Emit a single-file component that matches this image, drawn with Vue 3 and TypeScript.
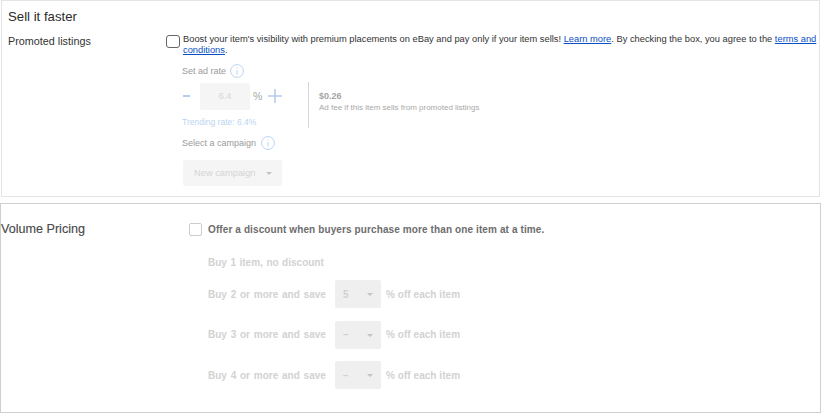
<script setup lang="ts">
interface Tier { label: string; value: string }
const tiers: Tier[] = [
  { label: 'Buy 2 or more and save', value: '5' },
  { label: 'Buy 3 or more and save', value: '–' },
  { label: 'Buy 4 or more and save', value: '–' },
]
</script>

<template>
  <div class="page">
    <section class="card sell">
      <h2 class="title">Sell it faster</h2>
      <div class="promo">
        <div class="promo-label">Promoted listings</div>
        <div class="promo-body">
          <div class="promo-check">
            <span class="box"></span>
            <div class="promo-text">
              <p class="promo-line">Boost your item's visibility with premium placements on eBay and pay only if your item sells! <a href="#">Learn more</a>. By checking the box, you agree to the <a href="#">terms and</a></p>
              <p class="promo-line"><a href="#">conditions</a>.</p>
            </div>
          </div>
          <div class="ad">
            <div class="ad-label">Set ad rate
              <svg class="info" width="14" height="14" viewBox="0 0 14 14"><circle cx="7" cy="7" r="6.4" fill="none" stroke="#b9d3f3"/><path d="M7 6v4.5M7 3.6v1.2" stroke="#b9d3f3" fill="none"/></svg>
            </div>
            <div class="rate-row">
              <div class="rate-left">
                <div class="stepper">
                  <span class="minus"></span>
                  <span class="rate-input">6.4</span>
                  <span class="pct">%</span>
                  <svg class="plus" width="14" height="14" viewBox="0 0 14 14"><path d="M7 0v14M0 7h14" stroke="#b4cdec" stroke-width="1.6" fill="none"/></svg>
                </div>
                <div class="trend">Trending rate: 6.4%</div>
              </div>
              <div class="fee">
                <div class="fee-value">$0.26</div>
                <div class="fee-text">Ad fee if this item sells from promoted listings</div>
              </div>
            </div>
            <div class="ad-label camp">Select a campaign
              <svg class="info" width="14" height="14" viewBox="0 0 14 14"><circle cx="7" cy="7" r="6.4" fill="none" stroke="#b9d3f3"/><path d="M7 6v4.5M7 3.6v1.2" stroke="#b9d3f3" fill="none"/></svg>
            </div>
            <div class="camp-select">
              <span>New campaign</span>
              <i class="caret"></i>
            </div>
          </div>
        </div>
      </div>
    </section>

    <section class="card volume">
      <h2 class="vol-title">Volume Pricing</h2>
      <div class="vol-body">
        <div class="vol-check">
          <span class="box light"></span>
          <span class="vol-text">Offer a discount when buyers purchase more than one item at a time.</span>
        </div>
        <div class="tier-first">Buy 1 item, no discount</div>
        <div v-for="t in tiers" :key="t.label" class="tier">
          <span class="tier-label">{{ t.label }}</span>
          <span class="tier-select"><span>{{ t.value }}</span><i class="caret small"></i></span>
          <span class="tier-off">% off each item</span>
        </div>
      </div>
    </section>
  </div>
</template>

<style scoped>
.page {
  width: 821px;
  height: 413px;
  box-sizing: border-box;
  background: #fff;
  font-family: "Liberation Sans", Arial, sans-serif;
  overflow: hidden;
}
.card { box-sizing: border-box; background: #fff; }
.sell {
  height: 197px;
  margin-left: 1px;
  margin-right: 1px;
  border: 1px solid #e4e4e4;
  padding: 8px 2px 0 6px;
}
.title {
  margin: 0;
  font-size: 13.2px;
  font-weight: 400;
  line-height: 16px;
  color: #2b2b2b;
}
.promo { display: flex; margin-top: 8px; }
.promo-label {
  width: 158px;
  flex: none;
  font-size: 10.8px;
  line-height: 16px;
  color: #333;
}
.promo-body { flex: 1; min-width: 0; }
.promo-check { display: flex; }
.box {
  flex: none;
  width: 12px;
  height: 11px;
  border: 1px solid #666;
  border-radius: 3px;
  margin-top: 2px;
  margin-right: 3px;
  background: #fff;
}
.promo-text {
  padding-top: 1px;
  font-size: 9.32px;
  line-height: 11px;
  color: #333;
}
.promo-line { margin: 0; white-space: nowrap; }
.promo-text a { color: #0b4fc4; text-decoration: underline; }
.ad { margin-left: 16px; margin-top: 7px; }
.ad-label {
  display: flex;
  align-items: center;
  gap: 4px;
  height: 16px;
  font-size: 9px;
  color: #9a9a9a;
}
.rate-row { display: flex; margin-top: 3px; height: 46px; }
.rate-left { width: 126px; flex: none; }
.stepper { display: flex; align-items: center; height: 26.5px; margin-top: 1px; }
.minus { width: 7px; height: 2px; background: #b4cdec; margin-left: 1px; }
.rate-input {
  width: 50px;
  height: 26.5px;
  margin-left: 10px;
  border-radius: 2px;
  background: #f5f5f5;
  color: #d6d6d6;
  font-size: 9px;
  line-height: 26.5px;
  text-align: center;
}
.pct { margin-left: 3px; font-size: 10.5px; color: #a8a8a8; }
.plus { margin-left: 6px; }
.trend { margin-top: 7.5px; font-size: 8.5px; line-height: 11px; color: #bcd4f2; }
.fee { border-left: 1px solid #d8d8d8; padding: 9px 0 0 10px; }
.fee-value { font-size: 9px; line-height: 11px; font-weight: 700; color: #a5a5a5; }
.fee-text { font-size: 8px; line-height: 11px; color: #a8a8a8; }
.camp { margin-top: 7px; gap: 5px; }
.camp-select {
  display: flex;
  align-items: center;
  justify-content: space-between;
  box-sizing: border-box;
  width: 99px;
  height: 26px;
  margin-top: 9px;
  margin-left: 1px;
  padding: 0 10px 0 11px;
  border-radius: 2px;
  background: #f5f5f5;
  color: #d4d4d4;
  font-size: 9.3px;
}
.caret {
  width: 0;
  height: 0;
  border-left: 3px solid transparent;
  border-right: 3px solid transparent;
  border-top: 3px solid #c4c4c4;
}
.volume {
  display: flex;
  height: 210px;
  margin-top: 6px;
  border: 1px solid #cfcfcf;
  padding: 17px 0 0;
}
.vol-title {
  width: 188px;
  flex: none;
  margin: 0;
  font-size: 12.6px;
  font-weight: 400;
  line-height: 16px;
  color: #4a4a4a;
  -webkit-text-stroke: 0.15px #4a4a4a;
}
.vol-body { flex: 1; min-width: 0; }
.vol-check { display: flex; align-items: center; height: 16px; }
.box.light { width: 11px; border-color: #ccc; margin: 0 6px 0 0; border-radius: 2px; }
.vol-text { font-size: 10px; font-weight: 700; color: #6d6d6d; letter-spacing: 0.11px; }
.tier-first {
  margin: 18px 0 0 19px;
  font-size: 10px;
  font-weight: 700;
  line-height: 16px;
  word-spacing: 0.75px;
  color: #d2d2d2;
}
.tier {
  display: flex;
  align-items: center;
  height: 28px;
  margin-left: 19px;
  margin-top: 12.5px;
  font-size: 10px;
  font-weight: 700;
  color: #d2d2d2;
}
.tier-first + .tier { margin-top: 9px; }
.tier-label { width: 127px; flex: none; word-spacing: 1px; }
.tier-select {
  display: flex;
  align-items: center;
  justify-content: space-between;
  box-sizing: border-box;
  width: 46px;
  height: 28px;
  padding: 0 8px 0 8px;
  background: #efefef;
  border-radius: 2px;
  margin-right: 5px;
}
.tier-off { letter-spacing: 0.05px; }
.caret.small { margin-top: 1px; }
</style>
